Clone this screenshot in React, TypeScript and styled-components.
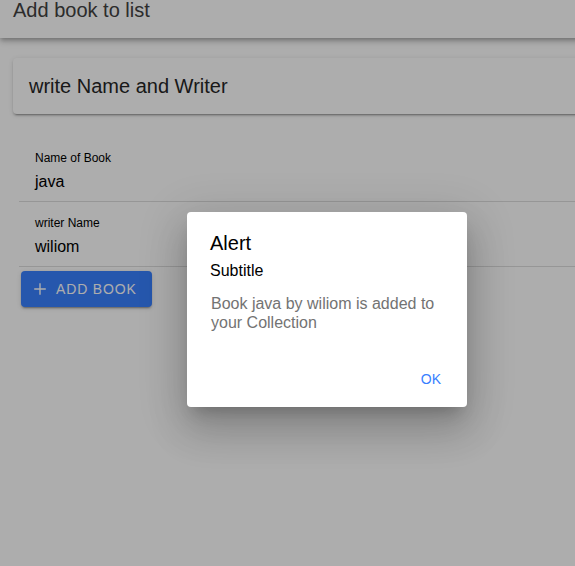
import React from 'react';
import styled, { createGlobalStyle } from 'styled-components';

const GlobalStyle = createGlobalStyle`
  html, body {
    margin: 0;
    padding: 0;
    overflow: hidden;
    background: #fff;
    font-family: "Liberation Sans", Arial, sans-serif;
  }
`;

const Page = styled.div`
  position: relative;
  width: 654px;
  height: 619px;
  overflow: hidden;
  background: #fff;
`;

const Header = styled.header`
  height: 38px;
  background: #fff;
  box-shadow: 0 2px 4px -1px rgba(0, 0, 0, 0.2), 0 4px 5px 0 rgba(0, 0, 0, 0.14),
    0 1px 10px 0 rgba(0, 0, 0, 0.12);
  position: relative;
  z-index: 1;
`;

const HeaderTitle = styled.h1`
  margin: 0;
  padding-left: 13px;
  font-size: 20px;
  line-height: 20px;
  font-weight: 500;
  color: #424242;
`;

const Content = styled.main`
  display: flex;
  flex-direction: column;
  align-items: flex-start;
`;

const Card = styled.section`
  align-self: stretch;
  margin: 20px 13px 23px;
  padding: 16px;
  border-radius: 4px;
  background: #fff;
  box-shadow: 0 3px 1px -2px rgba(0, 0, 0, 0.2), 0 2px 2px 0 rgba(0, 0, 0, 0.14),
    0 1px 5px 0 rgba(0, 0, 0, 0.12);
`;

const CardTitle = styled.h2`
  margin: 0;
  font-size: 20px;
  line-height: 24px;
  font-weight: 500;
  color: #262626;
`;

const List = styled.div`
  align-self: stretch;
  margin-left: 19px;
`;

const Item = styled.div`
  height: 64px;
  padding-left: 16px;
  border-bottom: 1px solid rgba(0, 0, 0, 0.13);
  display: flex;
  flex-direction: column;
`;

const Label = styled.label`
  margin-top: 14px;
  font-size: 12px;
  line-height: 14px;
  color: #000;
`;

const Value = styled.div`
  margin-top: 7px;
  font-size: 16px;
  line-height: 20px;
  color: #000;
`;

const AddButton = styled.button`
  margin: 4px 0 0 21px;
  height: 36px;
  padding: 0 15px 0 9px;
  display: flex;
  align-items: center;
  gap: 6px;
  border: none;
  border-radius: 4px;
  background: #3880ff;
  color: #fff;
  font-family: inherit;
  font-size: 14px;
  font-weight: 500;
  letter-spacing: 0.06em;
  text-transform: uppercase;
  box-shadow: 0 3px 1px -2px rgba(0, 0, 0, 0.2), 0 2px 2px 0 rgba(0, 0, 0, 0.14),
    0 1px 5px 0 rgba(0, 0, 0, 0.12);
`;

const Backdrop = styled.div`
  position: absolute;
  inset: 0;
  z-index: 10;
  background: rgba(0, 0, 0, 0.32);
  display: flex;
  align-items: center;
  justify-content: center;
`;

const Alert = styled.div`
  width: 280px;
  border-radius: 4px;
  background: #fff;
  box-shadow: 0 11px 15px -7px rgba(0, 0, 0, 0.2), 0 24px 38px 3px rgba(0, 0, 0, 0.14),
    0 9px 46px 8px rgba(0, 0, 0, 0.12);
  display: flex;
  flex-direction: column;
`;

const AlertHead = styled.div`
  padding: 20px 23px 14px;
`;

const AlertTitle = styled.h2`
  margin: 0;
  font-size: 20px;
  line-height: 23px;
  font-weight: 500;
  color: #000;
`;

const AlertSubTitle = styled.h3`
  margin: 7px 0 0;
  font-size: 16px;
  line-height: 18px;
  font-weight: 400;
  color: #000;
`;

const AlertMessage = styled.div`
  padding: 0 24px 21px;
  font-size: 16px;
  line-height: 1.2;
  color: #737373;
`;

const AlertButtons = styled.div`
  display: flex;
  justify-content: flex-end;
  padding: 8px 8px 10px 24px;
`;

const AlertButton = styled.button`
  height: 36px;
  margin-right: 8px;
  padding: 0 10px;
  border: none;
  border-radius: 2px;
  background: transparent;
  color: #3880ff;
  font-family: inherit;
  font-size: 14px;
  font-weight: 500;
  text-transform: uppercase;
`;

function PlusIcon() {
  return (
    <svg width='20' height='20' viewBox='0 0 20 20' fill='none' stroke='currentColor' strokeWidth='1.4'>
      <path d='M10 4.2v11.6M4.2 10h11.6' />
    </svg>
  );
}

export default function App() {
  return (
    <>
      <GlobalStyle />
      <Page>
        <Header>
          <HeaderTitle>Add book to list</HeaderTitle>
        </Header>
        <Content>
          <Card>
            <CardTitle>write Name and Writer</CardTitle>
          </Card>
          <List>
            <Item>
              <Label>Name of Book</Label>
              <Value>java</Value>
            </Item>
            <Item>
              <Label>writer Name</Label>
              <Value>wiliom</Value>
            </Item>
          </List>
          <AddButton>
            <PlusIcon />
            Add Book
          </AddButton>
        </Content>
        <Backdrop>
          <Alert>
            <AlertHead>
              <AlertTitle>Alert</AlertTitle>
              <AlertSubTitle>Subtitle</AlertSubTitle>
            </AlertHead>
            <AlertMessage>Book java by wiliom is added to your Collection</AlertMessage>
            <AlertButtons>
              <AlertButton>OK</AlertButton>
            </AlertButtons>
          </Alert>
        </Backdrop>
      </Page>
    </>
  );
}
